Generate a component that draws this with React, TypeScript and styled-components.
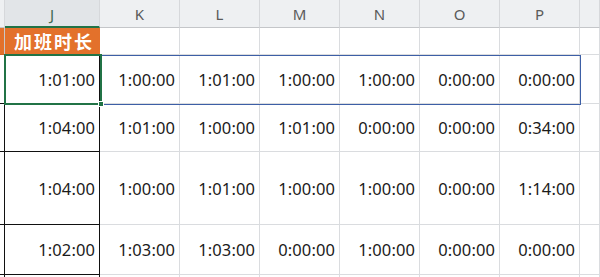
import React from "react";
import styled, { createGlobalStyle } from "styled-components";

const Global = createGlobalStyle`
  html, body { margin: 0; padding: 0; background: #ffffff; overflow: hidden; }
  * { box-sizing: border-box; }
`;

const Sheet = styled.div`
  position: relative;
  width: 600px;
  height: 277px;
  overflow: hidden;
  display: grid;
  grid-template-columns: 5px 95px repeat(6, 80px) 20px;
  grid-template-rows: 28px 27px 49px 48px 73px 50px 20px;
  font-family: "Noto Sans", "Noto Sans CJK SC", sans-serif;
`;

const HeaderCell = styled.div<{ $active?: boolean }>`
  background: ${(p) => (p.$active ? "#e2e5e8" : "#eef0f2")};
  border-right: 1px solid #d6d8db;
  border-bottom: ${(p) => (p.$active ? "2px solid #217346" : "1px solid #c4c6c9")};
  color: ${(p) => (p.$active ? "#3f6b52" : "#5a5a5a")};
  font-size: 15px;
  display: flex;
  align-items: center;
  justify-content: center;
  padding-top: 1px;
`;

const Cell = styled.div<{ $strong?: boolean }>`
  border-right: 1px solid ${(p) => (p.$strong ? "#111" : "#dadcdf")};
  border-bottom: 1px solid ${(p) => (p.$strong ? "#111" : "#dadcdf")};
  display: flex;
  align-items: center;
  justify-content: flex-end;
  padding-right: 4px;
  font-size: 16.5px;
  letter-spacing: 0.1px;
  color: #1b1b1b;
  background: #fff;
`;

const StubCell = styled.div<{ $orange?: boolean; $strong?: boolean }>`
  background: ${(p) => (p.$orange ? "#e3712b" : "#fff")};
  border-right: 1px solid ${(p) => (p.$strong ? "#111" : "#c8c8c8")};
  border-bottom: 1px solid ${(p) => (p.$orange ? "#cf6424" : p.$strong ? "#111" : "#dadcdf")};
`;

const TitleCell = styled.div`
  background: #e3712b;
  color: #ffffff;
  font-family: "Noto Sans CJK SC", sans-serif;
  font-weight: 700;
  font-size: 18px;
  letter-spacing: 2px;
  display: flex;
  align-items: center;
  justify-content: center;
  padding-left: 3px;
  border-bottom: 1px solid #cf6424;
`;

const Blank = styled.div`
  border-right: 1px solid #dadcdf;
  border-bottom: 1px solid #dadcdf;
`;

const Selection = styled.div`
  position: absolute;
  left: 4px;
  top: 55px;
  width: 577px;
  height: 50px;
  border: 1px solid #3d5fa6;
  pointer-events: none;
`;

const ActiveCell = styled.div`
  position: absolute;
  left: 4px;
  top: 54px;
  width: 98px;
  height: 51px;
  border: 2px solid #217346;
  pointer-events: none;
`;

const FillHandle = styled.div`
  position: absolute;
  left: 98px;
  top: 101px;
  width: 6px;
  height: 6px;
  background: #217346;
  border: 1px solid #fff;
`;

const letters = ["J", "K", "L", "M", "N", "O", "P"];
const rows = [
  ["1:01:00", "1:00:00", "1:01:00", "1:00:00", "1:00:00", "0:00:00", "0:00:00"],
  ["1:04:00", "1:01:00", "1:00:00", "1:01:00", "0:00:00", "0:00:00", "0:34:00"],
  ["1:04:00", "1:00:00", "1:01:00", "1:00:00", "1:00:00", "0:00:00", "1:14:00"],
  ["1:02:00", "1:03:00", "1:03:00", "0:00:00", "1:00:00", "0:00:00", "0:00:00"],
  ["", "", "", "", "", "", ""],
];

export default function App() {
  return (
    <>
      <Global />
      <Sheet>
        <HeaderCell />
        {letters.map((l, i) => (
          <HeaderCell key={l} $active={i === 0}>
            {l}
          </HeaderCell>
        ))}
        <HeaderCell />

        <StubCell $orange />
        <TitleCell>加班时长</TitleCell>
        {letters.slice(1).map((l) => (
          <Blank key={l} />
        ))}
        <Blank />

        {rows.map((r, ri) => (
          <React.Fragment key={ri}>
            <StubCell $strong />
            {r.map((v, ci) => (
              <Cell key={ci} $strong={ci === 0}>
                {v}
              </Cell>
            ))}
            <Blank />
          </React.Fragment>
        ))}

        <Selection />
        <ActiveCell />
        <FillHandle />
      </Sheet>
    </>
  );
}
